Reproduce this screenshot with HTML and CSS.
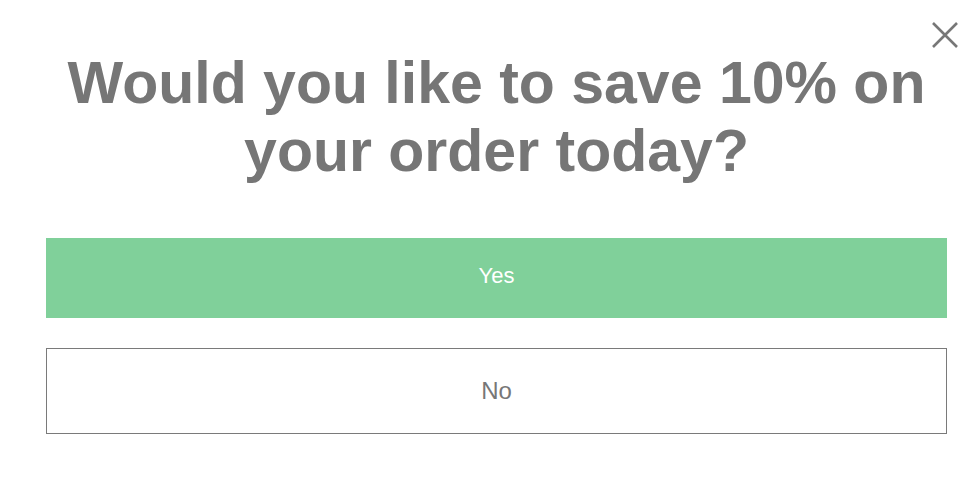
FILE: index.html
```html
<!DOCTYPE html>
<html>
<head>
<meta charset="utf-8">
<link rel="stylesheet" href="styles.css">
</head>
<body>
<div class="modal">
  <button class="close" aria-label="Close">
    <svg width="26" height="26" viewBox="0 0 26 26"><path d="M1 1 L25 25 M25 1 L1 25" stroke="#777" stroke-width="2.6" fill="none"/></svg>
  </button>
  <h1 class="title">Would you like to save 10% on your order today?</h1>
  <div class="actions">
    <button class="btn yes">Yes</button>
    <button class="btn no">No</button>
  </div>
</div>
</body>
</html>
```
FILE: styles.css
```css
html, body { margin: 0; padding: 0; background: #fff; }
body { font-family: "Liberation Sans", Arial, sans-serif; }
.modal {
  position: relative;
  width: 975px;
  height: 480px;
  box-sizing: border-box;
  padding: 49px 28px 0 46px;
}
.close {
  position: absolute;
  top: 22px;
  left: 932px;
  width: 26px;
  height: 26px;
  padding: 0;
  border: 0;
  background: none;
  display: block;
}
.close svg { display: block; }
.title {
  margin: 0;
  font-size: 59px;
  line-height: 68px;
  font-weight: 700;
  color: #767676;
  text-align: center;
}
.actions {
  margin-top: 53px;
  display: flex;
  flex-direction: column;
  gap: 30px;
}
.btn {
  display: block;
  width: 100%;
  font-family: "Liberation Sans", Arial, sans-serif;
  box-sizing: border-box;
  margin: 0;
}
.yes {
  height: 80px;
  border: 0;
  background: #80d09a;
  color: #fff;
  font-size: 22px;
  padding: 0 0 4px 0;
}
.no {
  height: 86px;
  border: 1px solid #7a7a7a;
  background: #fff;
  color: #777;
  font-size: 24px;
  padding: 0;
}
```
